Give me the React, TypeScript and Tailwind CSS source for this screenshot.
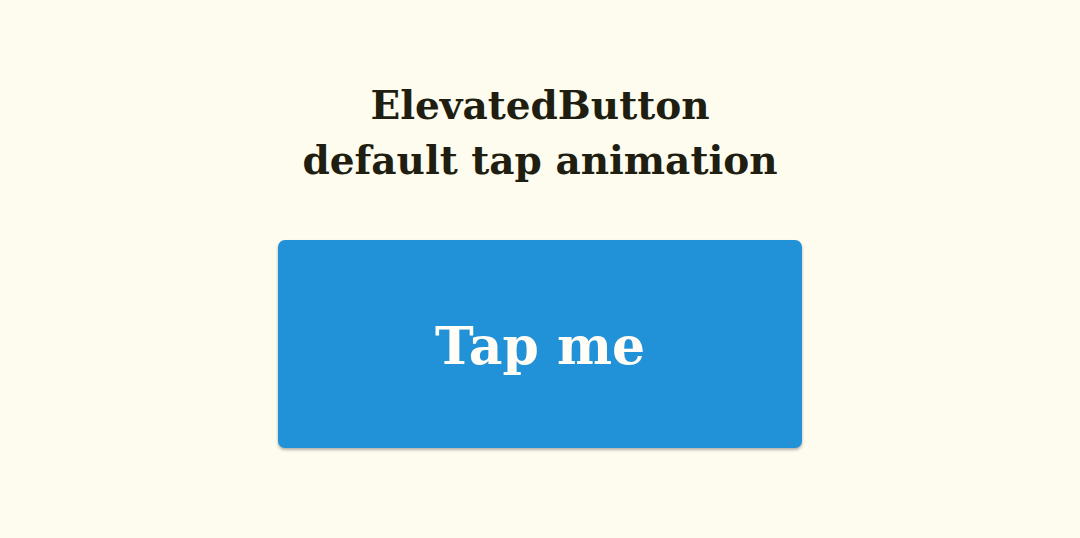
export default function App() {
  return (
    <div className="w-[1080px] h-[538px] bg-[#fefcef] flex flex-col items-center" style={{ fontFamily: '"DejaVu Serif", "Liberation Serif", serif' }}>
      <div className="mt-[78px] text-center font-bold text-[#201e10] text-[39px] leading-[55px]">
        <div>ElevatedButton</div>
        <div>default tap animation</div>
      </div>
      <button className="mt-[52px] w-[524px] h-[208px] rounded-[7px] bg-[#2192d8] text-[#fffdf5] font-bold text-[52px] shadow-[0_2px_3px_rgba(0,0,0,0.3)] flex items-center justify-center pt-[4px]">
        Tap me
      </button>
    </div>
  );
}
